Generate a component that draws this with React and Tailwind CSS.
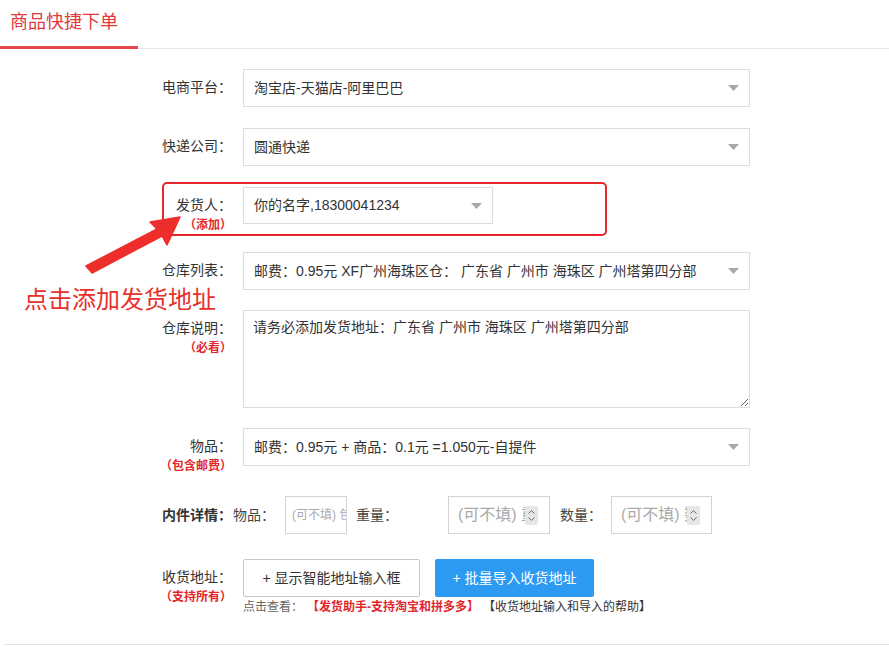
import React from "react";

const Caret = () => (
  <svg width="11" height="6" viewBox="0 0 11 6" className="shrink-0">
    <polygon points="0,0 11,0 5.5,6" fill="#a8a8a8" />
  </svg>
);

const Spinner = () => (
  <div className="w-[13px] h-[19px] bg-[#e6e6e6] rounded-[2px] flex flex-col items-center justify-center gap-[3px] shrink-0">
    <svg width="7" height="4" viewBox="0 0 7 4">
      <polyline points="0.5,3.5 3.5,0.7 6.5,3.5" fill="none" stroke="#666" strokeWidth="1" />
    </svg>
    <svg width="7" height="4" viewBox="0 0 7 4">
      <polyline points="0.5,0.5 3.5,3.3 6.5,0.5" fill="none" stroke="#666" strokeWidth="1" />
    </svg>
  </div>
);

const Label = ({ text, sub, bold }) => (
  <div className="w-[81px] shrink-0 text-right pt-[8px]">
    <div className={"text-[14px] leading-[20px] text-[#333] " + (bold ? "font-bold" : "")}>{text}</div>
    {sub && (
      <div className="text-[12px] leading-[20px] font-bold text-[#e3262c]">{sub}</div>
    )}
  </div>
);

const Select = ({ value, width = "w-[507px]", height = "h-[38px]" }) => (
  <div
    className={
      width +
      " " +
      height +
      " ml-[11px] border border-[#dcdcdc] bg-white flex items-center justify-between pl-[10px] pr-[10px] text-[14px] text-[#333]"
    }
  >
    <span className="whitespace-nowrap overflow-hidden">{value}</span>
    <Caret />
  </div>
);

const App = () => {
  return (
    <div className="relative w-[889px] h-[647px] bg-white font-['Liberation_Sans','Noto_Sans_CJK_SC',sans-serif] overflow-hidden">
      {/* tab header */}
      <div className="flex border-b border-[#e6e6e6] h-[49px]">
        <div className="w-[138px] border-b-[3px] border-[#e5474b] h-[49px] flex items-center pl-[10px] pb-[1px] text-[18px] text-[#e3393c]">
          商品快捷下单
        </div>
      </div>

      <div className="ml-[151px]">
        {/* 电商平台 */}
        <div className="flex mt-[20px]">
          <Label text="电商平台：" />
          <Select value="淘宝店-天猫店-阿里巴巴" />
        </div>

        {/* 快递公司 */}
        <div className="flex mt-[21px]">
          <Label text="快递公司：" />
          <Select value="圆通快递" />
        </div>

        {/* 发货人 */}
        <div className="relative flex mt-[21px] h-[44px]">
          <Label text="发货人：" sub="（添加）" />
          <Select value="你的名字,18300041234" width="w-[250px]" height="h-[37px]" />
          <div className="absolute left-[11px] top-[-5px] w-[445px] h-[54px] border-2 border-[#e8262b] rounded-[5px]" />
        </div>

        {/* 仓库列表 */}
        <div className="flex mt-[21px]">
          <Label text="仓库列表：" />
          <Select value="邮费：0.95元 XF广州海珠区仓： 广东省 广州市 海珠区 广州塔第四分部" />
        </div>

        {/* 仓库说明 */}
        <div className="flex mt-[20px]">
          <Label text="仓库说明：" sub="（必看）" />
          <textarea
            className="ml-[11px] w-[507px] h-[98px] border border-[#dcdcdc] px-[9px] pt-[6px] text-[14px] leading-[20px] text-[#333] outline-none"
            defaultValue="请务必添加发货地址：广东省 广州市 海珠区 广州塔第四分部"
          />
        </div>

        {/* 物品 */}
        <div className="flex mt-[20px] h-[48px]">
          <Label text="物品：" sub="（包含邮费）" />
          <Select value="邮费：0.95元 + 商品：0.1元 =1.050元-自提件" />
        </div>

        {/* 内件详情 */}
        <div className="flex items-center mt-[20px] h-[38px] text-[14px] text-[#444]">
          <div className="w-[81px] shrink-0 text-right font-bold text-[#333]">内件详情：</div>
          <span className="ml-[1px] w-[52px]">物品：</span>
          <input
            className="w-[62px] h-[38px] border border-[#d4d4d4] pl-[6px] text-[12px] placeholder:text-[#aaa] outline-none"
            placeholder="(可不填) 包裹重量"
          />
          <span className="ml-[9px] w-[92px]">重量：</span>
          <div className="w-[102px] h-[38px] border border-[#d4d4d4] flex items-center pr-[12px]">
            <input
              className="w-[76px] h-[36px] pl-[9px] text-[16px] placeholder:text-[#aaa] outline-none"
              placeholder="(可不填) 重量"
            />
            <Spinner />
          </div>
          <span className="ml-[10px] w-[51px]">数量：</span>
          <div className="w-[101px] h-[38px] border border-[#d4d4d4] flex items-center pr-[12px]">
            <input
              className="w-[75px] h-[36px] pl-[9px] text-[16px] placeholder:text-[#aaa] outline-none"
              placeholder="(可不填) 数量"
            />
            <Spinner />
          </div>
        </div>

        {/* 收货地址 */}
        <div className="flex mt-[25px]">
          <Label text="收货地址：" sub="（支持所有）" />
          <div className="ml-[11px]">
            <div className="flex gap-[15px]">
              <button className="w-[177px] h-[38px] border border-[#c9c9c9] bg-white rounded-[2px] text-[14px] text-[#333]">
                + 显示智能地址输入框
              </button>
              <button className="w-[159px] h-[38px] bg-[#2d9af2] rounded-[2px] text-[14px] text-white">
                + 批量导入收货地址
              </button>
            </div>
            <div className="flex text-[12px] leading-[18px] mt-[1px] whitespace-nowrap">
              <span className="text-[#666]">点击查看：</span>
              <span className="ml-[4px] font-bold text-[#e3262c]">【发货助手-支持淘宝和拼多多】</span>
              <span className="ml-[4px] text-[#333]">【收货地址输入和导入的帮助】</span>
            </div>
          </div>
        </div>
      </div>

      {/* bottom rule */}
      <div className="absolute left-[5px] right-0 top-[644px] border-t border-[#e3e3e3]" />

      {/* annotation arrow */}
      <svg className="absolute left-0 top-0 pointer-events-none" width="889" height="647">
        <polygon
          points="86,266 157,229 150,222 180,217 167,245 162,236 92,273"
          fill="#ee2e2a"
          stroke="#ee2e2a"
          strokeWidth="1.5"
          strokeLinejoin="round"
        />
      </svg>
      <div className="absolute left-[24px] top-[285px] text-[24px] leading-[30px] text-[#e8302c] whitespace-nowrap">
        点击添加发货地址
      </div>
    </div>
  );
};

export default App;
